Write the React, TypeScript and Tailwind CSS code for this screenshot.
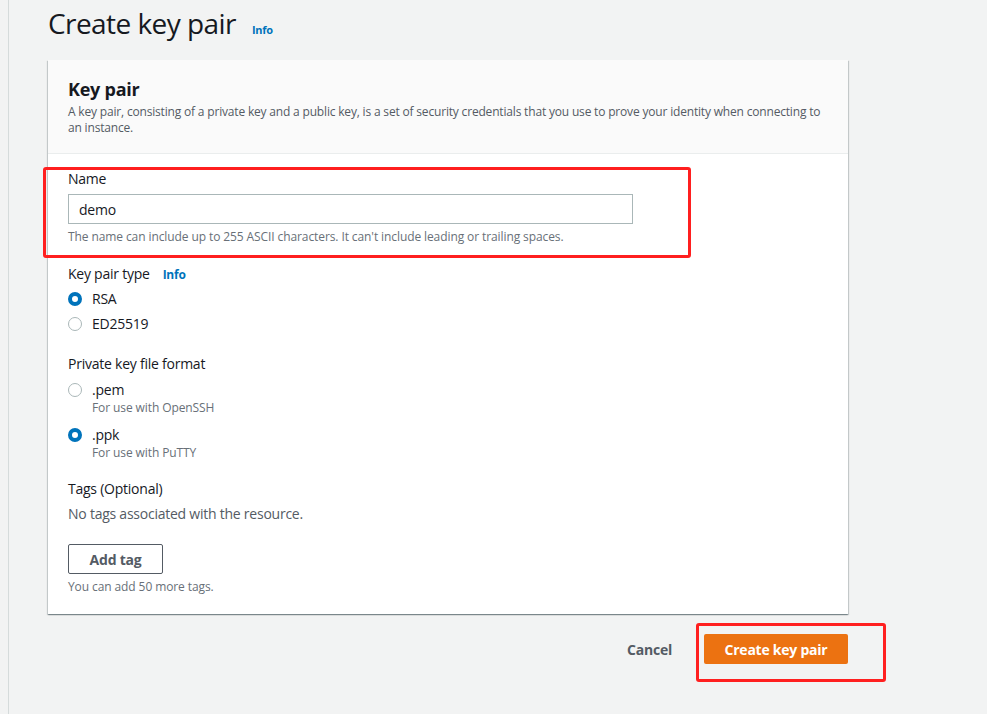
import React from 'react';

function Radio({ checked }: { checked: boolean }) {
  return checked ? (
    <span className="box-border block h-[14px] w-[14px] shrink-0 rounded-full border-[4px] border-[#0073bb] bg-white" />
  ) : (
    <span className="box-border block h-[14px] w-[14px] shrink-0 rounded-full border border-[#aab7b8] bg-white" />
  );
}

function Option({ checked, label, hint }: { checked: boolean; label: string; hint?: string }) {
  return (
    <div>
      <div className="flex h-5 items-center gap-[10px]">
        <Radio checked={checked} />
        <span className="text-[14px] leading-5 text-[#16191f]">{label}</span>
      </div>
      {hint && <div className="pl-6 text-[12px] leading-4 tracking-[-0.008em] text-[#687078]">{hint}</div>}
    </div>
  );
}

export default function App() {
  return (
    <main className="min-h-[714px] bg-[#f2f3f3] pl-2 font-['Open_Sans',sans-serif] tracking-[-0.015em] text-[#16191f]">
      <div className="min-h-[714px] border-l border-[#d5dbdb] pl-[39px]">

        {/* Page title */}
        <div className="flex h-10 items-baseline gap-4 pt-[5px]">
          <h1 className="text-[28px] leading-9 font-normal tracking-[-0.02em]">Create key pair</h1>
          <a className="text-[11px] font-bold text-[#0073bb]">Info</a>
        </div>

        {/* Card */}
        <div className="mt-5 w-[800px] bg-white shadow-[0_1px_1px_0_rgba(0,28,36,0.3),1px_1px_1px_0_rgba(0,28,36,0.15),-1px_1px_1px_0_rgba(0,28,36,0.15)]">
          <div className="border-b border-[#eaeded] bg-[#fafafa] px-5 pt-[18px] pb-[17px]">
            <h2 className="text-[18px] leading-[22px] font-bold">Key pair</h2>
            <p className="mt-1 text-[12px] leading-4 tracking-[-0.015em] text-[#545b64]">
              A key pair, consisting of a private key and a public key, is a set of security credentials that you use to prove your identity when connecting to an instance.
            </p>
          </div>

          <div className="px-5 pt-[15px] pb-[19px]">
            {/* Name (annotated) */}
            <div className="relative">
              <div className="text-[14px] leading-5">Name</div>
              <div className="mt-[5px] flex h-[30px] w-[565px] items-center border border-[#aab7b8] px-[10px] text-[14px]">
                demo
              </div>
              <div className="mt-[5px] text-[12px] leading-4 tracking-[-0.008em] text-[#687078]">
                The name can include up to 255 ASCII characters. It can't include leading or trailing spaces.
              </div>
              <div className="pointer-events-none absolute top-[-2px] left-[-25px] h-[91px] w-[648px] rounded-[3px] border-[3px] border-[#ff1f1f]" />
            </div>

            {/* Key pair type */}
            <div className="mt-[19px] flex items-baseline gap-[13px]">
              <span className="text-[14px] leading-5">Key pair type</span>
              <a className="text-[12px] font-bold text-[#0073bb]">Info</a>
            </div>
            <div className="mt-[5px] flex flex-col gap-[5px]">
              <Option checked label="RSA" />
              <Option checked={false} label="ED25519" />
            </div>

            {/* Private key file format */}
            <div className="mt-5 text-[14px] leading-5">Private key file format</div>
            <div className="mt-[6px] flex flex-col gap-[9px]">
              <Option checked={false} label=".pem" hint="For use with OpenSSH" />
              <Option checked label=".ppk" hint="For use with PuTTY" />
            </div>

            {/* Tags */}
            <div className="mt-[18px] text-[14px] leading-5">Tags (Optional)</div>
            <div className="mt-[5px] text-[14px] leading-5 text-[#545b64]">No tags associated with the resource.</div>
            <button className="mt-5 flex h-[30px] w-[95px] items-center justify-center rounded-[2px] border border-[#545b64] bg-white text-[14px] font-bold text-[#545b64]">
              Add tag
            </button>
            <div className="mt-[5px] text-[12px] leading-4 tracking-[-0.008em] text-[#687078]">You can add 50 more tags.</div>
          </div>
        </div>

        {/* Footer actions */}
        <div className="mt-5 flex w-[800px] items-center justify-end gap-8">
          <button className="text-[14px] font-bold text-[#545b64]">Cancel</button>
          <div className="relative">
            <button className="h-[30px] w-[144px] rounded-[2px] bg-[#ec7211] text-[14px] font-bold text-white">
              Create key pair
            </button>
            <div className="pointer-events-none absolute top-[-11px] left-[-8px] h-[59px] w-[190px] rounded-[3px] border-[3px] border-[#ff1f1f]" />
          </div>
        </div>
      </div>
    </main>
  );
}
